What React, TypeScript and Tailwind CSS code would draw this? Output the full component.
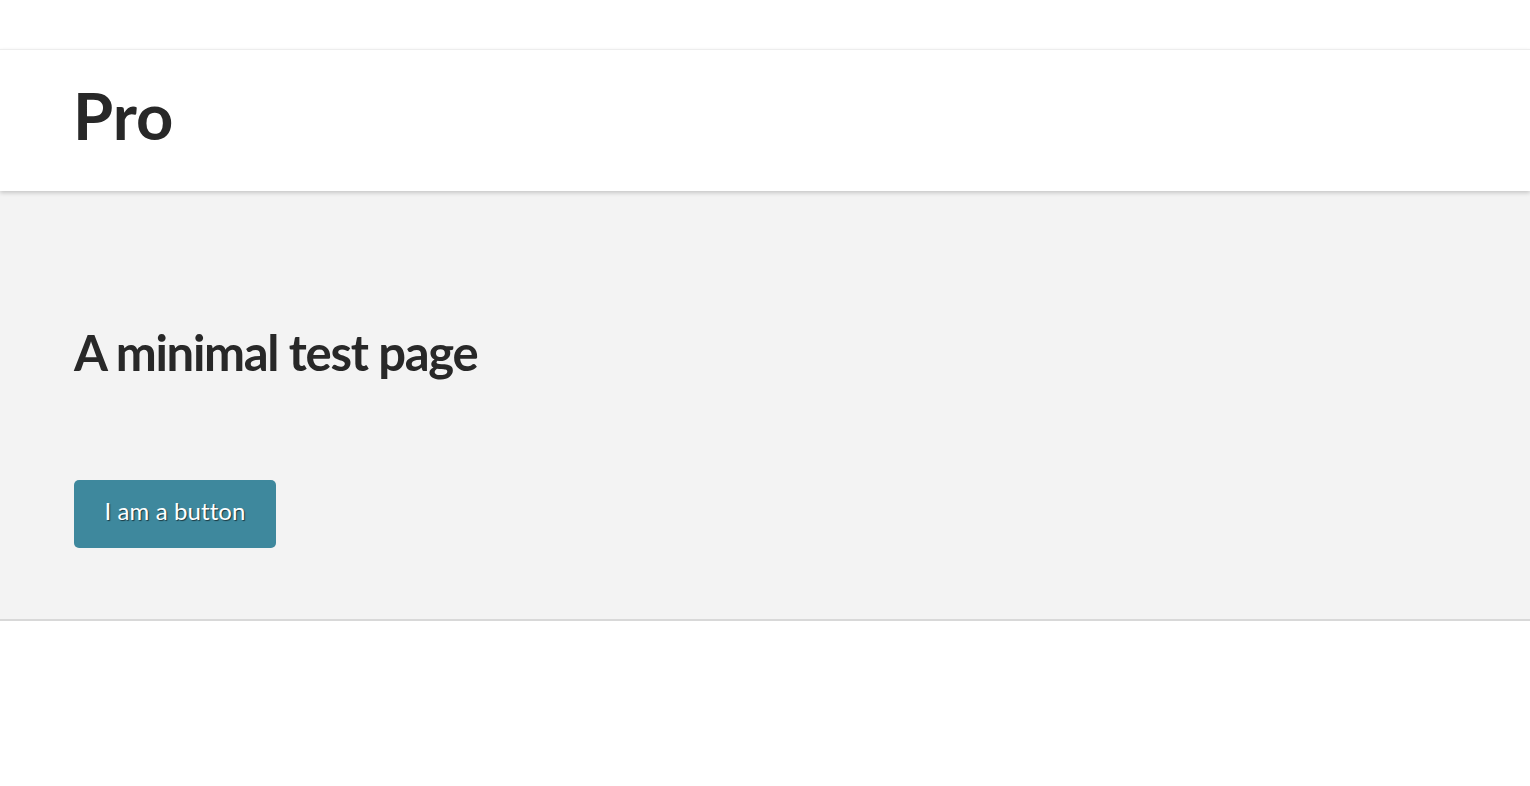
export default function App() {
  return (
    <div className="min-h-screen bg-white font-['Lato','Liberation_Sans',sans-serif] text-[#282828]">
      <div className="h-[49px]" />
      {/* Header */}
      <header className="relative z-10 h-[142px] border-t border-[#ededed] bg-white px-[73px] pt-[33px] shadow-[0_2px_4px_rgba(0,0,0,0.18)]">
        <h1 className="text-[65px] font-bold leading-none">Pro</h1>
      </header>

      {/* Main section */}
      <main className="h-[430px] border-b-2 border-[#d8d8d8] bg-[#f3f3f3] px-[74px] pt-[137px]">
        <h2 className="text-[49px] font-bold leading-none tracking-[-1.3px]">A minimal test page</h2>
        <button
          type="button"
          className="mt-[103px] flex h-[68px] w-[202px] justify-center rounded-[5px] bg-[#3e889d] pt-[19px] text-[24px] leading-none tracking-[0.1px] text-white [text-shadow:1px_1px_1px_rgba(0,0,0,0.6)]"
        >
          I am a button
        </button>
      </main>
    </div>
  );
}
